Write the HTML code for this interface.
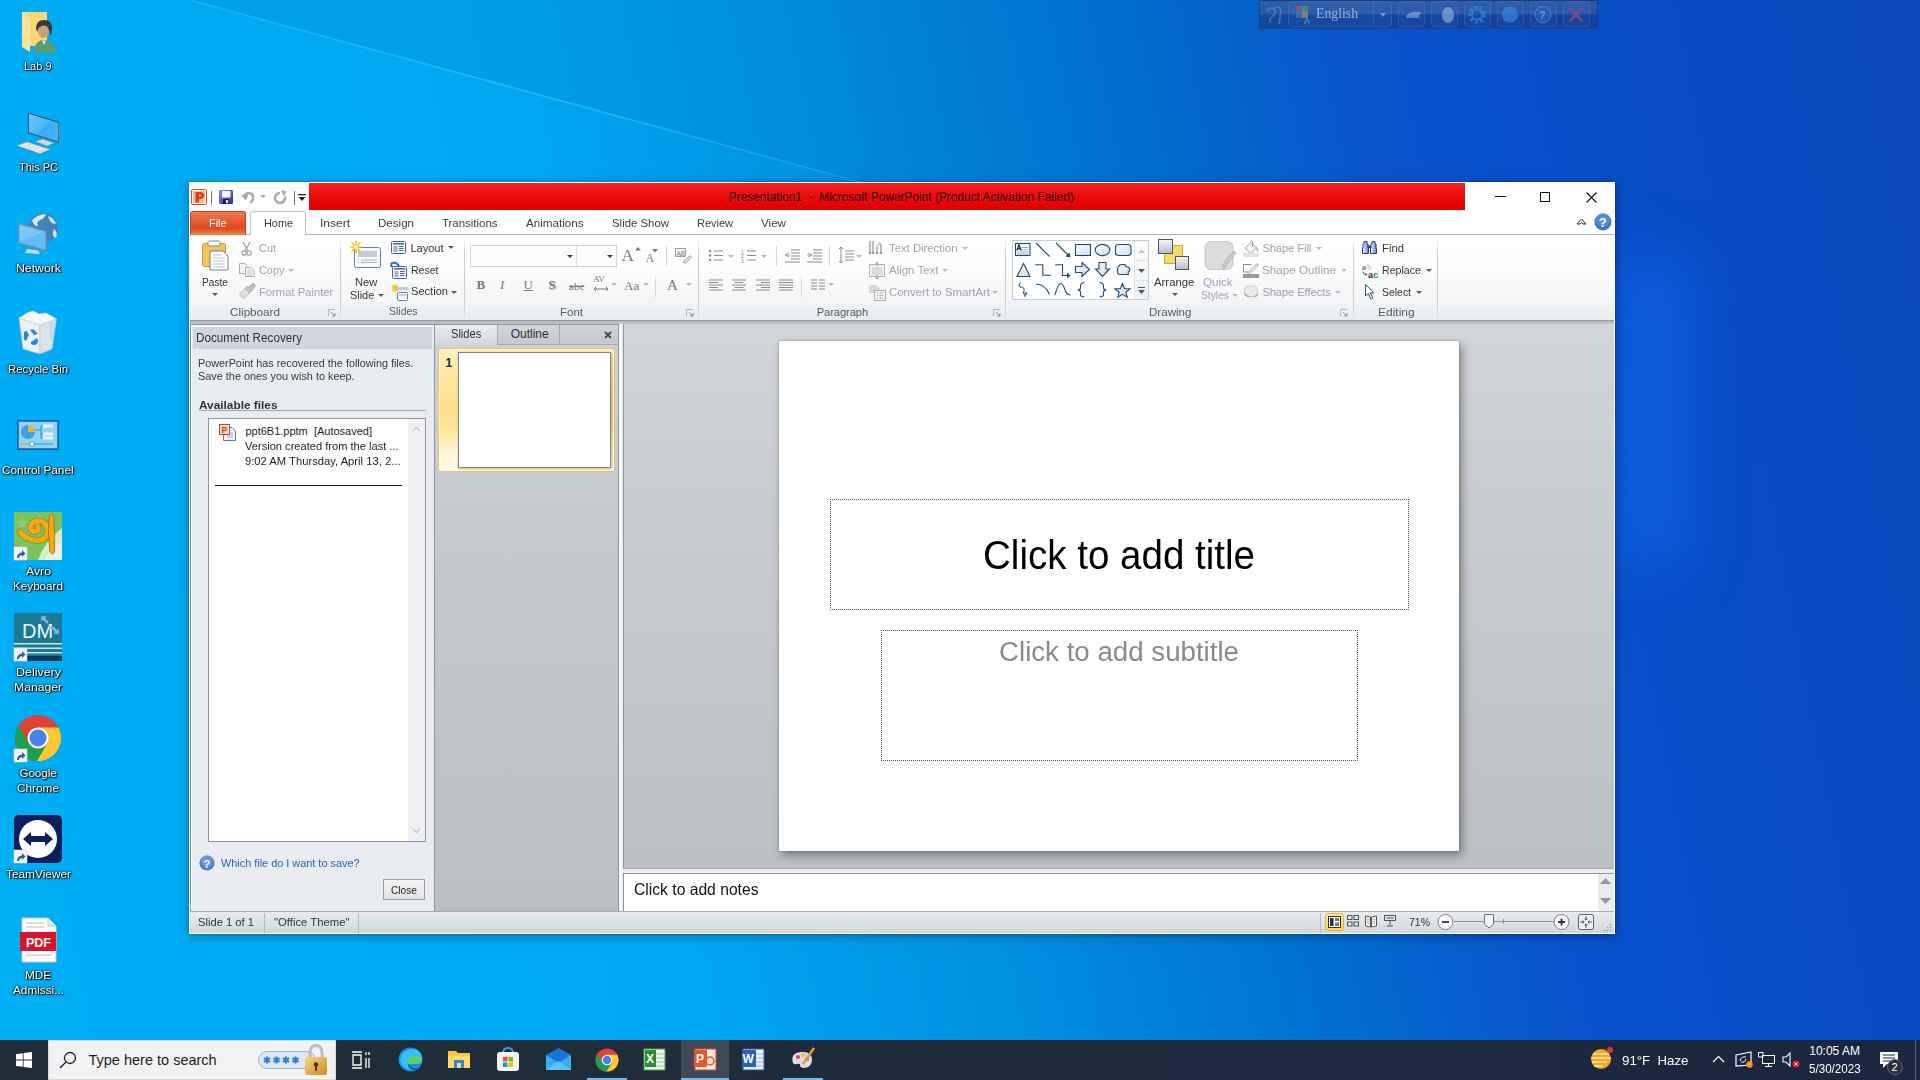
<!DOCTYPE html>
<html><head><meta charset="utf-8">
<style>
*{margin:0;padding:0;box-sizing:border-box}
html,body{width:1920px;height:1080px;overflow:hidden}
body{position:relative;font-family:"Liberation Sans",sans-serif;background:#0a6fe0}
.a{position:absolute}
.t{position:absolute;line-height:0;white-space:pre}
svg{overflow:visible}
.dl{color:#fff;text-shadow:0 0 2px rgba(0,0,0,.9),1px 1px 1px rgba(0,0,0,.8)}
</style></head><body>
<div class="a" style="left:0px;top:0px;width:1920px;height:1040px;background:linear-gradient(79deg,#00aef4 0px,#00a9f2 600px,#00a6f0 700px,#0090e0 1000px,#0070d0 1300px,#0857cc 1500px,#0851cc 1600px,#094cc4 1800px,#0a48bc 2032px)"></div>
<svg class="a" style="left:0;top:0" width="1920" height="1040"><defs><linearGradient id="ov" x1="190" y1="0" x2="1500" y2="0" gradientUnits="userSpaceOnUse"><stop offset="0" stop-color="#001a5a" stop-opacity=".07"/><stop offset=".6" stop-color="#001a5a" stop-opacity=".05"/><stop offset="1" stop-color="#001a5a" stop-opacity="0"/></linearGradient></defs><path d="M190 0 L1920 470 L1920 0Z" fill="url(#ov)"/></svg>
<div class="a" style="left:1615px;top:260px;width:70px;height:300px;background:rgba(20,115,255,.45);filter:blur(30px)"></div>
<svg class="a" style="left:0;top:0" width="1920" height="1040"><defs><linearGradient id="bm" x1="0" y1="0" x2="1" y2="0"><stop offset="0" stop-color="#5fd0ff" stop-opacity=".25"/><stop offset=".5" stop-color="#5fd0ff" stop-opacity=".45"/><stop offset="1" stop-color="#5fd0ff" stop-opacity=".2"/></linearGradient></defs><path d="M190 0 L860 182" stroke="url(#bm)" stroke-width="1.6" fill="none"/></svg>
<svg class="a" style="left:20px;top:12px;" width="40" height="44" viewBox="0 0 40 44">
<rect x="2" y="0" width="25" height="34" fill="#f3cd64"/>
<path d="M2 0 L27 0 L27 34 L2 34Z" fill="#f8d876"/>
<path d="M2 0 L10.5 7 L10 40 L2 35Z" fill="#fde39a"/>
<path d="M16 17 Q16 8 24 8 Q32 8 32 16 Q32 20 30 24 Q29 13 24 14 Q18 14 17 20Z" fill="#383838"/>
<ellipse cx="23.5" cy="19.5" rx="5.5" ry="6.5" fill="#c9a27a"/>
<path d="M17 18 Q17 10 24 10.5 Q30.5 11 31 17 Q28 13 24 13.5 Q19 13.5 17 18Z" fill="#383838"/>
<path d="M14 41 Q14 30 22 28 L26 28 Q35 30 36.5 41 Z" fill="#5a9c74"/>
<path d="M22 28.5 L24 33 L26 28.5Z" fill="#e8f0f4"/></svg>
<div class="t" style="left:24.25px;top:66.02px;font-size:11.5px;color:#fff;transform:scaleX(0.9556);transform-origin:0 0;text-shadow:1px 1px 1px #000,0 0 2px #000,0 0 3px rgba(0,0,0,.7);">Lab 9</div>
<svg class="a" style="left:16px;top:112px;" width="46" height="44" viewBox="0 0 46 44">
<defs><linearGradient id="pcs" x1="0" y1="0" x2="1" y2="1"><stop offset="0" stop-color="#6cc8fb"/><stop offset=".5" stop-color="#4ab8f8"/><stop offset=".51" stop-color="#36aef6"/><stop offset="1" stop-color="#41b4f7"/></linearGradient></defs>
<path d="M19.5 29.5 L26.5 27 L38 31 L31 34Z" fill="#d3d7db" stroke="#8c8f92" stroke-width=".5"/>
<path d="M12.4 1.2 L42.5 10.3 L42.5 30.2 L12.4 20.8Z" fill="url(#pcs)" stroke="#4a4a4a" stroke-width="1"/>
<path d="M42.5 10.3 L43.5 11 L43.5 30.8 L42.5 30.2Z" fill="#8a8a8a"/>
<path d="M1 33.5 L11 30 L34 37.5 L24 41.5Z" fill="#eceef0" stroke="#9a9a9a" stroke-width=".5"/>
<path d="M4.5 32.3 L27.5 39.8 M8 31 L31 38.6 M6 35.5 L16 32 M11 37 L21 33.6 M16 38.8 L26 35.2 M21 40.3 L31 36.8" stroke="#c4c6c8" stroke-width=".5"/></svg>
<div class="t" style="left:18.50px;top:167.02px;font-size:11.5px;color:#fff;transform:scaleX(0.9536);transform-origin:0 0;text-shadow:1px 1px 1px #000,0 0 2px #000,0 0 3px rgba(0,0,0,.7);">This PC</div>
<svg class="a" style="left:14px;top:212px;" width="50" height="46" viewBox="0 0 50 46">
<circle cx="29" cy="16" r="15" fill="#3f86b8"/>
<path d="M18 8 Q24 2 32 2 Q30 7 26 8 Q22 10 24 14 Q20 15 18 8Z" fill="#d6e7f3"/>
<path d="M34 4 Q40 6 42 12 Q38 12 36 9Z" fill="#d6e7f3"/>
<path d="M40 17 Q44 20 42 26 Q37 25 40 17Z" fill="#d6e7f3"/>
<path d="M4.5 11.5 L32 19.5 L32 38.5 L4.5 31Z" fill="#62bdf6" stroke="#7d8a96" stroke-width="1.3"/>
<path d="M6 13 L30 20 L6 29Z" fill="#8fd3fb" opacity=".5"/>
<path d="M13 37 L24 38.5 L26 42 L11 41Z" fill="#d4d8dc"/></svg>
<div class="t" style="left:15.50px;top:268.02px;font-size:11.5px;color:#fff;transform:scaleX(1.0670);transform-origin:0 0;text-shadow:1px 1px 1px #000,0 0 2px #000,0 0 3px rgba(0,0,0,.7);">Network</div>
<svg class="a" style="left:19px;top:311px;" width="38" height="44" viewBox="0 0 38 44">
<path d="M0 7 L21 14 L21 43 L4 38Z" fill="#eef1f4" stroke="#a9c4dc" stroke-width=".6"/>
<path d="M21 14 L37.5 8 L33 38 L21 43Z" fill="#dde3e8" stroke="#a9c4dc" stroke-width=".6"/>
<path d="M0 7 L8 2 L14 0 L20 3 L27 2 L37.5 8 L21 14Z" fill="#f6f7f8" stroke="#c9d3dc" stroke-width=".6"/>
<path d="M30 10 L36 12 L34 30 L31 28Z" fill="#b9d9ef" opacity=".7"/>
<path d="M11 19 Q15 17 17 21 L19 23 L15 24 Z M5 24 Q4 20 8 20 L10 24 L7 30 Q4 29 5 24Z M12 31 L18 27 Q20 30 18 33 Q15 35 12 33Z" fill="#2a86dc"/></svg>
<div class="t" style="left:8.00px;top:369.02px;font-size:11.5px;color:#fff;transform:scaleX(0.9882);transform-origin:0 0;text-shadow:1px 1px 1px #000,0 0 2px #000,0 0 3px rgba(0,0,0,.7);">Recycle Bin</div>
<svg class="a" style="left:17px;top:420px;" width="42" height="30" viewBox="0 0 42 30">
<rect x="0.5" y="0.5" width="41" height="29" fill="#2a7fcf" stroke="#1c5fa8"/>
<rect x="2" y="2" width="38" height="26" fill="#8fd3f7"/>
<circle cx="11" cy="12" r="7" fill="#3b9fe6"/><path d="M11 5 A7 7 0 0 1 18 12 L11 12Z" fill="#f6b02c"/>
<path d="M18 10 L24 10 L24 6 L36 6 M24 10 L24 14 L36 14 M24 14 L24 18 L36 18" stroke="#3a8ed6" stroke-width="1" fill="none"/>
<rect x="26" y="4.5" width="10" height="3" fill="#e9f4fb"/><rect x="26" y="12.5" width="10" height="3" fill="#e9f4fb"/><rect x="26" y="16.5" width="10" height="3" fill="#e9f4fb"/>
<path d="M4 24 L36 24" stroke="#3a8ed6" stroke-width="1"/><path d="M4 24 L14 24" stroke="#f6b02c" stroke-width="1.5"/><rect x="13" y="22" width="4" height="4" fill="#fff" stroke="#3a8ed6" stroke-width=".7"/></svg>
<div class="t" style="left:2.20px;top:470.02px;font-size:11.5px;color:#fff;transform:scaleX(1.0276);transform-origin:0 0;text-shadow:1px 1px 1px #000,0 0 2px #000,0 0 3px rgba(0,0,0,.7);">Control Panel</div>
<svg class="a" style="left:14px;top:512px;" width="48" height="48" viewBox="0 0 48 48">
<rect width="48" height="48" fill="#79c35a"/>
<path d="M24 48 Q30 30 48 16 L48 48Z" fill="#d9eec8"/>
<path d="M30 48 Q36 36 48 30 L48 48Z" fill="#e6f4dc"/>
<path d="M8 4 L10 9 L15 9 L11 12 L13 17 L8 14 L4 17 L5 12 L1 9 L6 9Z M26 2 L28 6 L32 6 L29 9 L30 13 L26 11 L22 13 L23 9 L20 6 L24 6Z" fill="#9ad47e" opacity=".6"/>
<path d="M6 20 Q13 28 23 28.5 Q33 28 33.5 19 Q33 9 24 9 Q16.5 9.5 16.5 15.5 Q17 20.5 22 19.5 Q25 18.5 24 14.5" stroke="#7a5a20" stroke-width="6.4" fill="none" stroke-linecap="round" opacity=".55"/>
<path d="M6 20 Q13 28 23 28.5 Q33 28 33.5 19 Q33 9 24 9 Q16.5 9.5 16.5 15.5 Q17 20.5 22 19.5 Q25 18.5 24 14.5" stroke="#f5a814" stroke-width="5" fill="none" stroke-linecap="round"/>
<path d="M35.5 3 Q37.5 0.5 39.5 3.5 Q41.5 20 40.5 40 Q38.5 44 36 40 Q33 22 35.5 3Z" fill="#f5a814" stroke="#8a6a2a" stroke-width=".7"/>
<g transform="translate(0,35)"><rect x="0" y="0" width="13" height="13" fill="#f4f6fa" stroke="#cfd5de" stroke-width=".6"/><path d="M3 11 Q3 6 8 5.5 L8 3 L11.5 6.5 L8 10 L8 8 Q5 8.5 5 11Z" fill="#2d5fa8"/></g></svg>
<div class="t" style="left:25.50px;top:571.02px;font-size:11.5px;color:#fff;transform:scaleX(1.0666);transform-origin:0 0;text-shadow:1px 1px 1px #000,0 0 2px #000,0 0 3px rgba(0,0,0,.7);">Avro</div>
<div class="t" style="left:13.00px;top:586.02px;font-size:11.5px;color:#fff;transform:scaleX(1.0157);transform-origin:0 0;text-shadow:1px 1px 1px #000,0 0 2px #000,0 0 3px rgba(0,0,0,.7);">Keyboard</div>
<svg class="a" style="left:14px;top:613px;" width="48" height="48" viewBox="0 0 48 48">
<rect width="48" height="48" fill="#1b7a93"/>
<text x="8" y="24" font-size="20" fill="#eef7fa" font-family="Liberation Sans" transform="scale(1,1.05)">DM</text>
<path d="M27 3 L33 3 L31 5 L35 9 L33 11 L29 7 L27 9Z M45 21 L39 21 L41 19 L37 15 L39 13 L43 17 L45 15Z M33 11 L37 15" fill="#7fb6e6" stroke="#3d7fc4" stroke-width=".6"/>
<rect x="0" y="30" width="48" height="1.5" fill="#cfe6ee"/><rect x="0" y="34.5" width="48" height="1.5" fill="#cfe6ee"/><rect x="0" y="39" width="48" height="1.5" fill="#cfe6ee"/>
<rect x="0" y="43" width="48" height="5" fill="#0c3a5c"/>
<g transform="translate(0,35)"><rect x="0" y="0" width="13" height="13" fill="#f4f6fa" stroke="#cfd5de" stroke-width=".6"/><path d="M3 11 Q3 6 8 5.5 L8 3 L11.5 6.5 L8 10 L8 8 Q5 8.5 5 11Z" fill="#2d5fa8"/></g></svg>
<div class="t" style="left:15.50px;top:672.02px;font-size:11.5px;color:#fff;transform:scaleX(1.0834);transform-origin:0 0;text-shadow:1px 1px 1px #000,0 0 2px #000,0 0 3px rgba(0,0,0,.7);">Delivery</div>
<div class="t" style="left:14.00px;top:687.02px;font-size:11.5px;color:#fff;transform:scaleX(1.0575);transform-origin:0 0;text-shadow:1px 1px 1px #000,0 0 2px #000,0 0 3px rgba(0,0,0,.7);">Manager</div>
<svg class="a" style="left:14px;top:714px;" width="48" height="48" viewBox="0 0 48 48"><circle cx="24" cy="24" r="23" fill="#db4437"/>
<path d="M24 24 L24 13.5 L44.46 13.5 A23 23 0 0 1 22.86 46.97 L33.09 29.25Z" fill="#fcc934"/>
<path d="M24 24 L33.09 29.25 L22.86 46.97 A23 23 0 0 1 4.68 11.53 L14.91 29.25Z" fill="#1e9e50"/>
<circle cx="24" cy="24" r="10.5" fill="#fff"/><circle cx="24" cy="24" r="8.5" fill="#4a80e8"/><g transform="translate(0,35)"><rect x="0" y="0" width="13" height="13" fill="#f4f6fa" stroke="#cfd5de" stroke-width=".6"/><path d="M3 11 Q3 6 8 5.5 L8 3 L11.5 6.5 L8 10 L8 8 Q5 8.5 5 11Z" fill="#2d5fa8"/></g></svg>
<div class="t" style="left:19.50px;top:773.02px;font-size:11.5px;color:#fff;text-shadow:1px 1px 1px #000,0 0 2px #000,0 0 3px rgba(0,0,0,.7);">Google</div>
<div class="t" style="left:17.00px;top:788.02px;font-size:11.5px;color:#fff;transform:scaleX(1.0269);transform-origin:0 0;text-shadow:1px 1px 1px #000,0 0 2px #000,0 0 3px rgba(0,0,0,.7);">Chrome</div>
<svg class="a" style="left:14px;top:815px;" width="48" height="48" viewBox="0 0 48 48">
<rect width="48" height="48" rx="5" fill="#0e1e5b"/>
<circle cx="24" cy="24" r="19" fill="#fff"/>
<path d="M9 24 L17 17 L17 21 L31 21 L31 17 L39 24 L31 31 L31 27 L17 27 L17 31Z" fill="#0e1e5b"/>
<g transform="translate(0,35)"><rect x="0" y="0" width="13" height="13" fill="#f4f6fa" stroke="#cfd5de" stroke-width=".6"/><path d="M3 11 Q3 6 8 5.5 L8 3 L11.5 6.5 L8 10 L8 8 Q5 8.5 5 11Z" fill="#2d5fa8"/></g></svg>
<div class="t" style="left:5.50px;top:874.02px;font-size:11.5px;color:#fff;transform:scaleX(1.0307);transform-origin:0 0;text-shadow:1px 1px 1px #000,0 0 2px #000,0 0 3px rgba(0,0,0,.7);">TeamViewer</div>
<svg class="a" style="left:20px;top:918px;" width="38" height="44" viewBox="0 0 38 44">
<path d="M2 0 L28 0 L36 8 L36 44 L2 44Z" fill="#fff" stroke="#c8c8c8"/>
<path d="M28 0 L28 8 L36 8" fill="#e8e8e8" stroke="#c8c8c8"/>
<path d="M6 5 L24 5 M6 9 L24 9" stroke="#bbb" stroke-width="1"/>
<rect x="0" y="14" width="36" height="19" fill="#d7142a"/>
<text x="6" y="29" font-size="12.5" font-weight="bold" fill="#fff" font-family="Liberation Sans">PDF</text>
<path d="M6 37 L32 37" stroke="#bbb"/></svg>
<div class="t" style="left:25.00px;top:975.02px;font-size:11.5px;color:#fff;transform:scaleX(1.0174);transform-origin:0 0;text-shadow:1px 1px 1px #000,0 0 2px #000,0 0 3px rgba(0,0,0,.7);">MDE</div>
<div class="t" style="left:12.50px;top:990.02px;font-size:11.5px;color:#fff;transform:scaleX(1.0233);transform-origin:0 0;text-shadow:1px 1px 1px #000,0 0 2px #000,0 0 3px rgba(0,0,0,.7);">Admissi...</div>
<div class="a" style="left:1259px;top:0px;width:339px;height:29px;background:linear-gradient(180deg,rgba(75,95,135,.55) 0,rgba(70,92,140,.5) 48%,rgba(30,55,120,.5) 52%,rgba(25,50,115,.55) 100%);border:1px solid rgba(30,55,110,.6)"></div>
<svg class="a" style="left:1259px;top:0;opacity:.62" width="339" height="29"><path d="M8 12 Q10 6 15 9 Q18 13 13 17 Q9 20 12 22 M15 9 Q20 4 22 10 L20 24" stroke="#6c87a8" stroke-width="1.6" fill="none"/><rect x="29.5" y="1.5" width="103" height="25" rx="3" fill="rgba(255,255,255,.04)" stroke="rgba(120,160,220,.35)"/><path d="M114.5 2 L114.5 26" stroke="rgba(120,160,220,.35)"/><path d="M121 13 L127 13 L124 17Z" fill="#a9c0e6"/><rect x="37" y="6" width="6" height="6" fill="#d9534f" opacity=".8"/><rect x="43" y="6" width="6" height="6" fill="#5cb85c" opacity=".8"/><rect x="37" y="12" width="6" height="6" fill="#428bca" opacity=".8"/><rect x="43" y="12" width="6" height="6" fill="#f0ad4e" opacity=".8"/><text x="45" y="24" font-size="9" fill="#c5d5ee" font-family="Liberation Sans">A</text><rect x="139.5" y="1.5" width="26" height="25" rx="3" fill="rgba(255,255,255,.04)" stroke="rgba(120,160,220,.35)"/><rect x="172.5" y="1.5" width="26" height="25" rx="3" fill="rgba(255,255,255,.04)" stroke="rgba(120,160,220,.35)"/><rect x="205.5" y="1.5" width="26" height="25" rx="3" fill="rgba(255,255,255,.04)" stroke="rgba(120,160,220,.35)"/><rect x="238.5" y="1.5" width="26" height="25" rx="3" fill="rgba(255,255,255,.04)" stroke="rgba(120,160,220,.35)"/><rect x="271.5" y="1.5" width="26" height="25" rx="3" fill="rgba(255,255,255,.04)" stroke="rgba(120,160,220,.35)"/><rect x="304.5" y="1.5" width="26" height="25" rx="3" fill="rgba(255,255,255,.04)" stroke="rgba(120,160,220,.35)"/><path d="M147 16 Q152 11 160 12 Q165 12 158 17Z" fill="#9cb5de"/><path d="M147 17 L160 17" stroke="#9cb5de" stroke-width="1.5"/><ellipse cx="189" cy="15" rx="6" ry="8" fill="#9cb5de"/><circle cx="218" cy="14.5" r="7" fill="none" stroke="#2f8ff0" stroke-width="4" stroke-dasharray="3 2"/><circle cx="218" cy="14.5" r="5" fill="none" stroke="#2f8ff0" stroke-width="2"/><circle cx="251" cy="14.5" r="8" fill="#3b8fe8"/><circle cx="284" cy="14.5" r="8" fill="#2a62c8" stroke="#6f9ce0" stroke-width="1"/><text x="280" y="19" font-size="11" font-weight="bold" fill="#a8c4ee" font-family="Liberation Sans">?</text><path d="M311 8 L323 21 M323 8 L311 21" stroke="#a0507a" stroke-width="3"/></svg>
<div class="t" style="left:1316.00px;top:13.65px;font-size:14px;color:#9fb3d6;font-family:'Liberation Serif',serif;transform:scaleX(0.9818);transform-origin:0 0;">English</div>
<div class="a" style="left:0px;top:1040px;width:1920px;height:40px;background:linear-gradient(90deg,#1f2d38 0,#1f2c3a 700px,#1d2a3e 1300px,#1b2640 1920px)"></div>
<svg class="a" style="left:16px;top:1052px;" width="16" height="16" viewBox="0 0 16 16"><path d="M0 2.2 L6.8 1.2 L6.8 7.6 L0 7.6Z M7.6 1.1 L16 0 L16 7.6 L7.6 7.6Z M0 8.4 L6.8 8.4 L6.8 14.8 L0 13.9Z M7.6 8.4 L16 8.4 L16 16 L7.6 14.9Z" fill="#fff"/></svg>
<div class="a" style="left:48px;top:1040px;width:288px;height:40px;background:#f2f2f2;border:1px solid #dadada"></div>
<svg class="a" style="left:59px;top:1051px;" width="18" height="18" viewBox="0 0 18 18"><circle cx="11" cy="7" r="5.5" fill="none" stroke="#222" stroke-width="1.3"/><path d="M7 11 L1 17" stroke="#222" stroke-width="1.5"/></svg>
<div class="t" style="left:88.50px;top:1060.48px;font-size:14.5px;color:#1e1e1e;">Type here to search</div>
<svg class="a" style="left:256px;top:1044px" width="72" height="34"><defs><linearGradient id="lkg" x1="0" y1="0" x2="1" y2="1"><stop offset="0" stop-color="#f8da80"/><stop offset="1" stop-color="#c98a25"/></linearGradient></defs><rect x="2.5" y="7.5" width="57" height="17" rx="8.5" fill="#dde7f4" stroke="#96b2de"/><path d="M11 12.5 L11 19.5 M7.9 14.2 L14.1 17.8 M14.1 14.2 L7.9 17.8" stroke="#2f7fd8" stroke-width="2"/><path d="M20.5 12.5 L20.5 19.5 M17.4 14.2 L23.6 17.8 M23.6 14.2 L17.4 17.8" stroke="#2f7fd8" stroke-width="2"/><path d="M30 12.5 L30 19.5 M26.9 14.2 L33.1 17.8 M33.1 14.2 L26.9 17.8" stroke="#2f7fd8" stroke-width="2"/><path d="M39.5 12.5 L39.5 19.5 M36.4 14.2 L42.6 17.8 M42.6 14.2 L36.4 17.8" stroke="#2f7fd8" stroke-width="2"/><path d="M54 15 L54 9 Q54 1.5 60 1.5 Q66 1.5 66 9 L66 15" stroke="#bdbdbd" stroke-width="3" fill="none"/><rect x="49" y="13" width="22" height="18" rx="2.5" fill="url(#lkg)"/><circle cx="60" cy="20.5" r="2.2" fill="#4a2e08"/><path d="M60 21 L60 27" stroke="#4a2e08" stroke-width="1.8"/></svg>
<svg class="a" style="left:351px;top:1051px;" width="19" height="18" viewBox="0 0 19 18"><path d="M1 1 L11 1 M1 17 L11 17 M2 4 L10 4 L10 14 L2 14Z M15 1 L15 4 M15 7 L15 17 M18 1 L18 4 M18 7 L18 17" stroke="#fff" stroke-width="1.3" fill="none"/></svg>
<svg class="a" style="left:398px;top:1047px;" width="25" height="25" viewBox="0 0 25 25"><circle cx="12.5" cy="12.5" r="12" fill="#1a8fe0"/><path d="M2 14 Q4 2 15 2 Q24 3 24 12 Q24 17 18 17 L10 17 Q10 22 16 23 Q6 24 2 14Z" fill="#35c1f1"/><path d="M24 12 Q24 17 18 17 L10 17 Q9 10 15 9 Q23 9 24 12Z" fill="#5fcf6a"/><path d="M10 17 Q10 22 16 23 Q20 24 23 20 Q17 23 13 20Z" fill="#0c59a4"/></svg>
<svg class="a" style="left:447px;top:1048px;" width="24" height="22" viewBox="0 0 24 22"><path d="M1 3 L9 3 L11 5 L23 5 L23 20 L1 20Z" fill="#f8c544"/><path d="M1 8 L23 8 L23 20 L1 20Z" fill="#ffd96a"/><rect x="7" y="12" width="10" height="8" fill="#2f89d8"/><rect x="10" y="15" width="4" height="5" fill="#ffd96a"/></svg>
<svg class="a" style="left:496px;top:1047px;" width="24" height="25" viewBox="0 0 24 25"><path d="M7 6 Q7 1 12 1 Q17 1 17 6" stroke="#2aa0e8" stroke-width="2" fill="none"/><rect x="1" y="5" width="22" height="19" rx="3" fill="#f4f4f4"/><rect x="7" y="10" width="4.5" height="4.5" fill="#f25022"/><rect x="12.5" y="10" width="4.5" height="4.5" fill="#7fba00"/><rect x="7" y="15.5" width="4.5" height="4.5" fill="#00a4ef"/><rect x="12.5" y="15.5" width="4.5" height="4.5" fill="#ffb900"/></svg>
<svg class="a" style="left:546px;top:1048px;" width="25" height="22" viewBox="0 0 25 22"><path d="M0 7 L12.5 0 L25 7 L25 22 L0 22Z" fill="#1a74d2"/><path d="M0 7 L12.5 15 L25 7 L25 22 L0 22Z" fill="#38aef0"/><path d="M0 22 L12.5 13 L25 22Z" fill="#5cc3f5"/></svg>
<svg class="a" style="left:595px;top:1048px;" width="24" height="24" viewBox="0 0 48 48"><circle cx="24" cy="24" r="23" fill="#db4437"/>
<path d="M24 24 L24 13.5 L44.46 13.5 A23 23 0 0 1 22.86 46.97 L33.09 29.25Z" fill="#fcc934"/>
<path d="M24 24 L33.09 29.25 L22.86 46.97 A23 23 0 0 1 4.68 11.53 L14.91 29.25Z" fill="#1e9e50"/>
<circle cx="24" cy="24" r="10.5" fill="#fff"/><circle cx="24" cy="24" r="8.5" fill="#4a80e8"/></svg>
<div class="a" style="left:587px;top:1078px;width:40px;height:2px;background:#76b9ed"></div>
<svg class="a" style="left:643px;top:1048px;" width="24" height="23" viewBox="0 0 24 23"><rect x="1" y="1" width="21" height="21" fill="#e9f3e6" stroke="#4c9a4c"/><path d="M12 6 L22 6 M12 10 L22 10 M12 14 L22 14 M12 18 L22 18" stroke="#8dbb8a" stroke-width=".8"/><path d="M2 2 L13 2 L13 19 L2 19Z" fill="#2d8a37"/><text x="3" y="15" font-size="12" font-weight="bold" fill="#fff" font-family="Liberation Sans">X</text></svg>
<div class="a" style="left:681px;top:1040px;width:48px;height:40px;background:#3e4b56"></div>
<div class="a" style="left:681px;top:1078px;width:48px;height:2px;background:#76b9ed"></div>
<svg class="a" style="left:693px;top:1048px;" width="24" height="23" viewBox="0 0 24 23"><rect x="2" y="1" width="21" height="21" fill="#fbe5dc" stroke="#d24726"/><path d="M1 2 L14 2 L14 19 L1 19Z" fill="#e2572c"/><text x="3" y="15" font-size="12" font-weight="bold" fill="#fff" font-family="Liberation Sans">P</text><circle cx="17" cy="13" r="4" fill="none" stroke="#e2572c" stroke-width="1.5"/></svg>
<svg class="a" style="left:741px;top:1048px;" width="25" height="23" viewBox="0 0 25 23"><rect x="2" y="1" width="21" height="21" fill="#e6eefa" stroke="#2b5797"/><path d="M13 6 L22 6 M13 10 L22 10 M13 14 L22 14 M13 18 L22 18" stroke="#8aa7d3" stroke-width=".8"/><path d="M1 2 L15 2 L15 19 L1 19Z" fill="#2b5fb4"/><text x="1.5" y="15" font-size="12" font-weight="bold" fill="#fff" font-family="Liberation Sans">W</text></svg>
<svg class="a" style="left:790px;top:1047px;" width="25" height="25" viewBox="0 0 25 25"><path d="M3 16 Q0 6 11 5 Q22 4 22 13 Q22 20 14 21 Q10 21 10 18 Q10 16 7 17 Q4 18 3 16Z" fill="#d9dde6"/><circle cx="8" cy="10" r="2" fill="#e23c3c"/><circle cx="13" cy="8" r="2" fill="#f2c12e"/><circle cx="17" cy="12" r="2" fill="#3c8fe2"/><path d="M24 1 L13 17" stroke="#e39a30" stroke-width="2.5"/></svg>
<div class="a" style="left:783px;top:1078px;width:40px;height:2px;background:#76b9ed"></div>
<svg class="a" style="left:1589px;top:1047px;" width="25" height="22" viewBox="0 0 25 22"><circle cx="12" cy="12" r="10" fill="#f6a623"/><path d="M4 7 L20 7 M2 11 L22 11 M3 15 L18 15 M5 19 L14 19" stroke="#fde7b0" stroke-width="1.5"/><circle cx="21" cy="3" r="3" fill="#d83b2c"/></svg>
<div class="t" style="left:1621.50px;top:1060.50px;font-size:13px;color:#fff;transform:scaleX(1.0204);transform-origin:0 0;">91°F  Haze</div>
<svg class="a" style="left:1712px;top:1055px;" width="13" height="8" viewBox="0 0 13 8"><path d="M1 7 L6.5 1.5 L12 7" stroke="#fff" stroke-width="1.2" fill="none"/></svg>
<svg class="a" style="left:1735px;top:1051px;" width="18" height="17" viewBox="0 0 18 17"><path d="M1 4 L16 1 L16 14 L1 15Z" stroke="#fff" stroke-width="1.2" fill="none"/><path d="M5 10 Q6 5 11 6 M11 8 Q10 12 6 11" stroke="#fff" stroke-width="1" fill="none"/><circle cx="14.5" cy="13.5" r="3.2" fill="#f7941d"/></svg>
<svg class="a" style="left:1758px;top:1052px;" width="17" height="16" viewBox="0 0 17 16"><rect x="4.5" y="3.5" width="12" height="8" stroke="#fff" fill="none"/><path d="M10.5 11.5 L10.5 14.5 M7 14.5 L14 14.5 M0.5 0.5 L5 0.5 L5 5 L0.5 5Z" stroke="#fff" fill="none"/></svg>
<svg class="a" style="left:1782px;top:1052px;" width="18" height="16" viewBox="0 0 18 16"><path d="M1 5 L4 5 L8 1 L8 14 L4 10 L1 10Z" stroke="#fff" stroke-width="1.1" fill="none"/><circle cx="14" cy="12" r="3.6" fill="#e81123"/><path d="M12.5 10.5 L15.5 13.5 M15.5 10.5 L12.5 13.5" stroke="#fff" stroke-width="1"/></svg>
<div class="t" style="left:1809.25px;top:1050.84px;font-size:12px;color:#fff;">10:05 AM</div>
<div class="t" style="left:1808.65px;top:1068.84px;font-size:12px;color:#fff;transform:scaleX(0.9684);transform-origin:0 0;">5/30/2023</div>
<svg class="a" style="left:1879px;top:1051px;" width="28" height="25" viewBox="0 0 28 25"><path d="M1 1 L19 1 L19 13 L8 13 L4 17 L4 13 L1 13Z" fill="#fff"/><path d="M4 4 L16 4 M4 7 L16 7 M4 10 L13 10" stroke="#1b2640" stroke-width="1"/><circle cx="16" cy="16" r="7.5" fill="#2a3038" stroke="#5c6570" stroke-width="1"/><text x="12.5" y="20" font-size="11" fill="#fff" font-family="Liberation Sans">2</text></svg>
<div class="a" style="left:1915px;top:1040px;width:1px;height:40px;background:#5a6470"></div>
<div class="a" style="left:189px;top:182px;width:1426px;height:752px;background:#fff;box-shadow:0 2px 10px rgba(0,0,0,.35),0 0 1px rgba(0,0,0,.4)"></div>
<svg class="a" style="left:191px;top:189px;" width="16" height="16" viewBox="0 0 16 16"><rect x="0.5" y="0.5" width="15" height="15" rx="1.5" fill="#fff" stroke="#dd4a18"/><rect x="2" y="2" width="12" height="12" fill="#fbb79c"/><path d="M4.5 3 L9.5 3 Q13 3.3 13 6.5 Q13 9.7 9.5 10 L8 10 L8 13.5 L4.5 13.5Z M8 5.5 L8 7.7 L9 7.7 Q10 7.6 10 6.6 Q10 5.6 9 5.5Z" fill="#d0480e" fill-rule="evenodd"/></svg>
<div class="a" style="left:211px;top:191px;width:1px;height:14px;background:#777"></div>
<svg class="a" style="left:219px;top:190px;" width="14" height="14" viewBox="0 0 14 14"><defs><linearGradient id="svg1" x1="0" y1="0" x2="1" y2="1"><stop offset="0" stop-color="#8a8af5"/><stop offset="1" stop-color="#2c2ca8"/></linearGradient></defs><rect x="0" y="0" width="14" height="14" rx="1" fill="url(#svg1)"/><rect x="3" y="1" width="8.5" height="6.5" fill="#f4f6fc"/><rect x="4" y="9" width="6" height="5" fill="#1a1a2a"/><rect x="6.8" y="10" width="2.4" height="3.2" fill="#dde"/></svg>
<svg class="a" style="left:241px;top:190px;" width="14" height="14" viewBox="0 0 14 14"><path d="M3.5 8 Q3 3 8 3 Q12.5 3.5 12 8.5 Q11.5 11.5 9 13" stroke="#acacac" stroke-width="2.6" fill="none"/><path d="M0 5 L5 10.5 L7.5 4.5Z" fill="#acacac"/></svg>
<svg class="a" style="left:260px;top:195px;" width="6" height="3" viewBox="0 0 6 3"><path d="M0 0 L6 0 L3 3Z" fill="#a8a8a8"/></svg>
<svg class="a" style="left:273px;top:190px;" width="14" height="14" viewBox="0 0 14 14"><path d="M7 3 A5 5 0 1 0 11.8 6.5" stroke="#acacac" stroke-width="2.6" fill="none"/><path d="M8 0 L13.5 1.5 L10.5 6.5Z" fill="#acacac"/></svg>
<div class="a" style="left:294px;top:191px;width:1px;height:14px;background:#777"></div>
<svg class="a" style="left:298px;top:194px;" width="8" height="7" viewBox="0 0 8 7"><rect x="0" y="0" width="8" height="1.3" fill="#222"/><path d="M0.5 3 L7.5 3 L4 7Z" fill="#222"/></svg>
<div class="a" style="left:309px;top:183px;width:1156px;height:27px;background:linear-gradient(180deg,#f5201f 0,#ea0f0f 45%,#dc0000 100%)"></div>
<div class="t" style="left:729.00px;top:197.34px;font-size:12px;color:#2a0000;transform:scaleX(0.9909);transform-origin:0 0;">Presentation1  -  Microsoft PowerPoint (Product Activation Failed)</div>
<div class="a" style="left:1495px;top:196px;width:11px;height:1px;background:#111"></div>
<div class="a" style="left:1540px;top:192px;width:10px;height:10px;border:1px solid #111"></div>
<svg class="a" style="left:1586px;top:192px;" width="11" height="11" viewBox="0 0 11 11"><path d="M0.5 0.5 L10.5 10.5 M10.5 0.5 L0.5 10.5" stroke="#111" stroke-width="1.1"/></svg>
<div class="a" style="left:190px;top:234px;width:1424px;height:1px;background:#aab1b8"></div>
<div class="a" style="left:190px;top:211px;width:56px;height:24px;background:linear-gradient(180deg,#ef7a52 0,#e45a2e 45%,#d8482a 70%,#ef8a3a 100%);border:1px solid #c9411c;border-bottom:none;border-radius:3px 3px 0 0"></div>
<div class="t" style="left:209.25px;top:223.02px;font-size:11.5px;color:#fff;transform:scaleX(0.9444);transform-origin:0 0;">File</div>
<div class="a" style="left:250px;top:211px;width:56px;height:24px;background:#fff;border:1px solid #bcc3ca;border-bottom:none;border-radius:3px 3px 0 0"></div>
<div class="t" style="left:263.50px;top:223.02px;font-size:11.5px;color:#3c3c3c;transform:scaleX(0.9454);transform-origin:0 0;">Home</div>
<div class="t" style="left:320.00px;top:223.02px;font-size:11.5px;color:#3c3c3c;transform:scaleX(1.0431);transform-origin:0 0;">Insert</div>
<div class="t" style="left:378.00px;top:223.02px;font-size:11.5px;color:#3c3c3c;transform:scaleX(1.0057);transform-origin:0 0;">Design</div>
<div class="t" style="left:442.00px;top:223.02px;font-size:11.5px;color:#3c3c3c;transform:scaleX(0.9943);transform-origin:0 0;">Transitions</div>
<div class="t" style="left:526.00px;top:223.02px;font-size:11.5px;color:#3c3c3c;transform:scaleX(1.0108);transform-origin:0 0;">Animations</div>
<div class="t" style="left:612.00px;top:223.02px;font-size:11.5px;color:#3c3c3c;transform:scaleX(0.9907);transform-origin:0 0;">Slide Show</div>
<div class="t" style="left:697.00px;top:223.02px;font-size:11.5px;color:#3c3c3c;transform:scaleX(0.9547);transform-origin:0 0;">Review</div>
<div class="t" style="left:761.00px;top:223.02px;font-size:11.5px;color:#3c3c3c;transform:scaleX(1.0114);transform-origin:0 0;">View</div>
<svg class="a" style="left:1576px;top:217px;" width="11" height="9" viewBox="0 0 11 9"><path d="M1 7 L5.5 2 L10 7 L7 7 L5.5 5.5 L4 7Z" stroke="#333" stroke-width="1" fill="none"/></svg>
<svg class="a" style="left:1594px;top:213px;" width="18" height="18" viewBox="0 0 18 18"><circle cx="9" cy="9" r="8.5" fill="#3f76c8"/><circle cx="9" cy="7" r="7" fill="#6f9ee0" opacity=".5"/><text x="4.8" y="14" font-size="13" font-weight="bold" fill="#fff" font-family="Liberation Sans">?</text></svg>
<div class="a" style="left:190px;top:235px;width:1424px;height:85px;background:linear-gradient(180deg,#ffffff 0,#fdfdfe 40%,#f3f5f7 75%,#e9ecef 100%)"></div>
<div class="a" style="left:190px;top:320px;width:1424px;height:1px;background:#929aa3"></div>
<div class="a" style="left:190px;top:321px;width:1424px;height:4px;background:linear-gradient(180deg,#b2b7bd,#c6cacf)"></div>
<div class="a" style="left:190px;top:324px;width:429px;height:1px;background:#8c939b"></div>
<div class="a" style="left:340px;top:238px;width:1px;height:80px;background:linear-gradient(180deg,rgba(200,205,212,0),#c9ced5 20%,#c9ced5 80%,rgba(200,205,212,.3))"></div>
<div class="a" style="left:464px;top:238px;width:1px;height:80px;background:linear-gradient(180deg,rgba(200,205,212,0),#c9ced5 20%,#c9ced5 80%,rgba(200,205,212,.3))"></div>
<div class="a" style="left:698px;top:238px;width:1px;height:80px;background:linear-gradient(180deg,rgba(200,205,212,0),#c9ced5 20%,#c9ced5 80%,rgba(200,205,212,.3))"></div>
<div class="a" style="left:1005px;top:238px;width:1px;height:80px;background:linear-gradient(180deg,rgba(200,205,212,0),#c9ced5 20%,#c9ced5 80%,rgba(200,205,212,.3))"></div>
<div class="a" style="left:1353px;top:238px;width:1px;height:80px;background:linear-gradient(180deg,rgba(200,205,212,0),#c9ced5 20%,#c9ced5 80%,rgba(200,205,212,.3))"></div>
<div class="a" style="left:1437px;top:238px;width:1px;height:80px;background:linear-gradient(180deg,rgba(200,205,212,0),#c9ced5 20%,#c9ced5 80%,rgba(200,205,212,.3))"></div>
<svg class="a" style="left:202px;top:240px;" width="27" height="31" viewBox="0 0 27 31"><rect x="0.5" y="3.5" width="23" height="23" rx="2" fill="#f3c35c" stroke="#c99a3a"/><rect x="6" y="1" width="12" height="5" rx="1" fill="#fff" stroke="#8a8a8a"/><path d="M8 11 L21 11 L26 16 L26 30 L8 30Z" fill="#fff" stroke="#6f7f95"/><path d="M11 15 L19 15 M11 18 L23 18 M11 21 L23 21 M11 24 L23 24 M11 27 L23 27" stroke="#b8c3d0" stroke-width="1"/></svg>
<div class="t" style="left:201.50px;top:281.79px;font-size:11px;color:#363636;transform:scaleX(0.9243);transform-origin:0 0;">Paste</div>
<svg class="a" style="left:211.5px;top:293.0px;" width="6" height="3" viewBox="0 0 6 3"><path d="M0 0 L6 0 L3 3Z" fill="#595959"/></svg>
<svg class="a" style="left:241px;top:241px;" width="11" height="15" viewBox="0 0 11 15"><path d="M2 1 L7 10 M9 1 L4 10" stroke="#a6a6a6" stroke-width="1.5"/><circle cx="3" cy="12" r="2.2" stroke="#a6a6a6" stroke-width="1.3" fill="none"/><circle cx="8" cy="12" r="2.2" stroke="#a6a6a6" stroke-width="1.3" fill="none"/></svg>
<div class="t" style="left:258.60px;top:247.89px;font-size:11px;color:#a3a3ad;transform:scaleX(0.9931);transform-origin:0 0;">Cut</div>
<svg class="a" style="left:239px;top:263px;" width="16" height="14" viewBox="0 0 16 14"><path d="M0.5 0.5 L6 0.5 L8 2.5 L8 10.5 L0.5 10.5Z" fill="#f4f4f4" stroke="#b0b0b0"/><path d="M6.5 4.5 L12 4.5 L15 7.5 L15 13.5 L6.5 13.5Z" fill="#f4f4f4" stroke="#b0b0b0"/><path d="M8.5 8 L13 8 M8.5 10 L13 10 M8.5 12 L13 12" stroke="#c4c4c4"/></svg>
<div class="t" style="left:258.60px;top:269.69px;font-size:11px;color:#a3a3ad;transform:scaleX(0.9891);transform-origin:0 0;">Copy</div>
<svg class="a" style="left:288px;top:269.0px;" width="6" height="3" viewBox="0 0 6 3"><path d="M0 0 L6 0 L3 3Z" fill="#bbbbc4"/></svg>
<svg class="a" style="left:239px;top:284px;" width="17" height="16" viewBox="0 0 17 16"><path d="M0.5 10 L6 4.5 L10.5 9 L5 14.5 Q2 14 0.5 10Z" fill="#e2e2e2" stroke="#b4b4b4" stroke-width=".8"/><path d="M6 4.5 L8.5 2 L13 6.5 L10.5 9Z" fill="#c8c8c8" stroke="#a8a8a8" stroke-width=".8"/><path d="M9.5 3 L14 -0.5 Q16.5 0 16 2.5 L12 7" fill="#bdbdbd" stroke="#a0a0a0" stroke-width=".8"/><path d="M2 11 L4 13 M3.5 9 L6.5 12" stroke="#c8c8c8" stroke-width=".7"/></svg>
<div class="t" style="left:258.60px;top:291.89px;font-size:11px;color:#a3a3ad;transform:scaleX(1.0214);transform-origin:0 0;">Format Painter</div>
<div class="t" style="left:230.40px;top:311.69px;font-size:11px;color:#545a66;transform:scaleX(1.0619);transform-origin:0 0;">Clipboard</div>
<svg class="a" style="left:328px;top:309px;" width="8" height="8" viewBox="0 0 8 8"><path d="M0.5 7 L0.5 0.5 L7 0.5" stroke="#b4b8be" fill="none"/><path d="M3 3 L7 7 M7 4 L7 7 L4 7" stroke="#8c9096" fill="none"/></svg>
<svg class="a" style="left:350px;top:241px;" width="32" height="28" viewBox="0 0 32 28"><rect x="4.5" y="6.5" width="26" height="20" rx="2" fill="#f7f8fb" stroke="#6d7f97"/><rect x="8" y="10" width="19" height="6" fill="#c4cad6"/><path d="M8 19 L9 19 M11 19 L27 19 M8 21.5 L9 21.5 M11 21.5 L27 21.5" stroke="#aab3c2"/><path d="M6 0 L6 12 M0 6 L12 6 M1.5 1.5 L10.5 10.5 M10.5 1.5 L1.5 10.5" stroke="#f2c21d" stroke-width="1.6"/><circle cx="6" cy="6" r="2" fill="#fff6c0"/></svg>
<div class="t" style="left:355.35px;top:281.99px;font-size:11px;color:#363636;transform:scaleX(1.0134);transform-origin:0 0;">New</div>
<div class="t" style="left:350.40px;top:294.69px;font-size:11px;color:#363636;transform:scaleX(0.9894);transform-origin:0 0;">Slide</div>
<svg class="a" style="left:377.5px;top:294.0px;" width="6" height="3" viewBox="0 0 6 3"><path d="M0 0 L6 0 L3 3Z" fill="#595959"/></svg>
<svg class="a" style="left:391px;top:241px;" width="15" height="13" viewBox="0 0 15 13"><rect x="0.5" y="0.5" width="14" height="12" rx="1" fill="#f4f6fa" stroke="#4f6384"/><rect x="2" y="2" width="11" height="1.6" fill="#5a6f93"/><rect x="2.5" y="5" width="4" height="6" fill="#a9b0bb"/><path d="M8 5.5 L12.5 5.5 M8 7.5 L12.5 7.5 M8 9.5 L12.5 9.5" stroke="#4a66a8"/></svg>
<div class="t" style="left:410.50px;top:247.69px;font-size:11px;color:#363636;">Layout</div>
<svg class="a" style="left:447.5px;top:246.0px;" width="6" height="3" viewBox="0 0 6 3"><path d="M0 0 L6 0 L3 3Z" fill="#595959"/></svg>
<svg class="a" style="left:391px;top:262px;" width="17" height="17" viewBox="0 0 17 17"><g transform="translate(1,4)"><rect x="0.5" y="0.5" width="14" height="12" rx="1" fill="#f4f6fa" stroke="#4f6384"/><rect x="2" y="2" width="11" height="1.6" fill="#5a6f93"/><rect x="2.5" y="5" width="4" height="6" fill="#a9b0bb"/><path d="M8 5.5 L12.5 5.5 M8 7.5 L12.5 7.5 M8 9.5 L12.5 9.5" stroke="#4a66a8"/></g><path d="M0 2 Q4 -1 7 3 L8 5" stroke="#2f6fcf" stroke-width="2.2" fill="none"/><path d="M0 0 L2 5 L-1 5Z" fill="#2f6fcf"/></svg>
<div class="t" style="left:410.50px;top:269.59px;font-size:11px;color:#363636;transform:scaleX(0.9570);transform-origin:0 0;">Reset</div>
<svg class="a" style="left:391px;top:284px;" width="17" height="17" viewBox="0 0 17 17"><path d="M4 0 L4 8 M0 4 L8 4 M1 1 L7 7 M7 1 L1 7" stroke="#f2c21d" stroke-width="1.2"/><rect x="6" y="3" width="11" height="3" fill="#c8ccd2"/><rect x="6.5" y="8.5" width="10" height="8" rx="1" fill="#f6f8fb" stroke="#6d7f97"/><rect x="8" y="10" width="7" height="2" fill="#c4cad6"/></svg>
<div class="t" style="left:410.50px;top:291.49px;font-size:11px;color:#363636;transform:scaleX(1.0084);transform-origin:0 0;">Section</div>
<svg class="a" style="left:451px;top:290.5px;" width="6" height="3" viewBox="0 0 6 3"><path d="M0 0 L6 0 L3 3Z" fill="#595959"/></svg>
<div class="t" style="left:388.60px;top:311.39px;font-size:11px;color:#545a66;transform:scaleX(0.9546);transform-origin:0 0;">Slides</div>
<div class="a" style="left:470px;top:245px;width:147px;height:22px;background:#fbfcfd;border:1px solid #cfd6de"></div>
<div class="a" style="left:576px;top:246px;width:1px;height:20px;background:#dde2e8"></div>
<svg class="a" style="left:566.5px;top:254.5px;" width="6" height="3" viewBox="0 0 6 3"><path d="M0 0 L6 0 L3 3Z" fill="#444"/></svg>
<svg class="a" style="left:606.5px;top:254.5px;" width="6" height="3" viewBox="0 0 6 3"><path d="M0 0 L6 0 L3 3Z" fill="#444"/></svg>
<div class="t" style="left:621.5px;top:256.11px;font-size:17px;color:#7a7a7a;font-family:'Liberation Serif',serif">A</div>
<svg class="a" style="left:635px;top:247px;" width="6" height="4" viewBox="0 0 6 4"><path d="M0 3.5 L3 0 L6 3.5Z" fill="#7a7a7a"/></svg>
<div class="t" style="left:645.5px;top:257.84px;font-size:12px;color:#7a7a7a;font-family:'Liberation Serif',serif">A</div>
<svg class="a" style="left:652px;top:249px;" width="6" height="4" viewBox="0 0 6 4"><path d="M0 0 L6 0 L3 3.5Z" fill="#7a7a7a"/></svg>
<div class="a" style="left:666px;top:246px;width:1px;height:20px;background:#d4d8de"></div>
<svg class="a" style="left:675px;top:248px;" width="17" height="16" viewBox="0 0 17 16"><rect x="0.5" y="0.5" width="10" height="8" fill="#f6f6f6" stroke="#a0a0a0"/><text x="1.5" y="7.5" font-size="6.5" fill="#7a7a7a" font-family="Liberation Sans">AB</text><path d="M8 14 L14 8 Q16 7 16.5 9 L11 15 Q9 16 8 14Z" fill="#e4e4e4" stroke="#a8a8a8"/></svg>
<div class="t" style="left:476.5px;top:285.00px;font-size:13px;font-weight:bold;color:#7a7a7a;font-family:'Liberation Serif',serif">B</div>
<div class="t" style="left:500px;top:285.00px;font-size:13px;font-style:italic;color:#7a7a7a;font-family:'Liberation Serif',serif">I</div>
<div class="t" style="left:523.5px;top:285.00px;font-size:13px;color:#7a7a7a;font-family:'Liberation Serif',serif;text-decoration:underline">U</div>
<div class="t" style="left:548.5px;top:285.00px;font-size:13px;font-weight:bold;color:#7a7a7a;font-family:'Liberation Serif',serif;text-shadow:1px 1px 2px #aaa">S</div>
<div class="t" style="left:569px;top:285.69px;font-size:11px;color:#7a7a7a;font-family:'Liberation Serif',serif;text-decoration:line-through">abc</div>
<div class="t" style="left:593px;top:278.88px;font-size:9px;color:#7a7a7a;font-family:'Liberation Serif',serif">AV</div>
<svg class="a" style="left:593px;top:286px;" width="16" height="6" viewBox="0 0 16 6"><path d="M1 3 L15 3 M3 1 L1 3 L3 5 M13 1 L15 3 L13 5" stroke="#7a7a7a" stroke-width="1" fill="none"/></svg>
<svg class="a" style="left:610.5px;top:283.0px;" width="6" height="3" viewBox="0 0 6 3"><path d="M0 0 L6 0 L3 3Z" fill="#b8b8c0"/></svg>
<div class="t" style="left:624px;top:285.50px;font-size:13px;color:#7a7a7a;font-family:'Liberation Serif',serif">Aa</div>
<svg class="a" style="left:642.5px;top:283.0px;" width="6" height="3" viewBox="0 0 6 3"><path d="M0 0 L6 0 L3 3Z" fill="#b8b8c0"/></svg>
<div class="a" style="left:655px;top:277px;width:1px;height:20px;background:#d4d8de"></div>
<div class="t" style="left:667px;top:284.80px;font-size:15px;color:#7a7a7a;font-family:'Liberation Serif',serif">A</div>
<svg class="a" style="left:685.5px;top:283.0px;" width="6" height="3" viewBox="0 0 6 3"><path d="M0 0 L6 0 L3 3Z" fill="#b8b8c0"/></svg>
<div class="t" style="left:560.00px;top:311.59px;font-size:11px;color:#545a66;transform:scaleX(1.0449);transform-origin:0 0;">Font</div>
<svg class="a" style="left:686px;top:309px;" width="8" height="8" viewBox="0 0 8 8"><path d="M0.5 7 L0.5 0.5 L7 0.5" stroke="#b4b8be" fill="none"/><path d="M3 3 L7 7 M7 4 L7 7 L4 7" stroke="#8c9096" fill="none"/></svg>
<svg class="a" style="left:708px;top:249px;" width="16" height="13" viewBox="0 0 16 13"><circle cx="2" cy="2" r="1.3" fill="#8a8a8a"/><circle cx="2" cy="6.5" r="1.3" fill="#8a8a8a"/><circle cx="2" cy="11" r="1.3" fill="#8a8a8a"/><path d="M6 2 L15 2 M6 6.5 L15 6.5 M6 11 L15 11" stroke="#8a8a8a" stroke-width="1.1"/></svg>
<svg class="a" style="left:728px;top:254.5px;" width="6" height="3" viewBox="0 0 6 3"><path d="M0 0 L6 0 L3 3Z" fill="#b8b8c0"/></svg>
<svg class="a" style="left:741px;top:249px;" width="16" height="13" viewBox="0 0 16 13"><text x="0" y="4.5" font-size="5" fill="#8a8a8a" font-family="Liberation Sans">1</text><text x="0" y="9" font-size="5" fill="#8a8a8a" font-family="Liberation Sans">2</text><text x="0" y="13.5" font-size="5" fill="#8a8a8a" font-family="Liberation Sans">3</text><path d="M6 2 L15 2 M6 6.5 L15 6.5 M6 11 L15 11" stroke="#8a8a8a" stroke-width="1.1"/></svg>
<svg class="a" style="left:761px;top:254.5px;" width="6" height="3" viewBox="0 0 6 3"><path d="M0 0 L6 0 L3 3Z" fill="#b8b8c0"/></svg>
<div class="a" style="left:776px;top:246px;width:1px;height:20px;background:#d4d8de"></div>
<svg class="a" style="left:784px;top:248px;" width="17" height="15" viewBox="0 0 17 15"><path d="M7 2 L16 2 M7 5 L16 5 M7 8 L16 8 M7 11 L16 11 M1 14 L16 14" stroke="#8a8a8a" stroke-width="1.1"/><path d="M5 5 L1 7 L5 9 M1 7 L6 7" stroke="#a0a0a0" fill="none"/></svg>
<svg class="a" style="left:806px;top:248px;" width="17" height="15" viewBox="0 0 17 15"><path d="M7 2 L16 2 M7 5 L16 5 M7 8 L16 8 M7 11 L16 11 M1 14 L16 14" stroke="#8a8a8a" stroke-width="1.1"/><path d="M2 5 L6 7 L2 9 M1 7 L6 7" stroke="#a0a0a0" fill="none"/></svg>
<div class="a" style="left:829px;top:246px;width:1px;height:20px;background:#d4d8de"></div>
<svg class="a" style="left:838px;top:246px;" width="18" height="18" viewBox="0 0 18 18"><path d="M7 5 L16 5 M7 8 L16 8 M7 11 L16 11 M7 14 L16 14" stroke="#8a8a8a" stroke-width="1.1"/><path d="M3 1 L3 17 M1 3 L3 1 L5 3 M1 15 L3 17 L5 15" stroke="#8a8a8a" fill="none"/></svg>
<svg class="a" style="left:856px;top:254.5px;" width="6" height="3" viewBox="0 0 6 3"><path d="M0 0 L6 0 L3 3Z" fill="#b8b8c0"/></svg>
<svg class="a" style="left:869px;top:240px;" width="16" height="16" viewBox="0 0 16 16"><path d="M1 1 L1 14 M4 1 L4 14 M8 6 L8 14 M12 6 L12 14" stroke="#8a8a8a" stroke-width="1.1"/><path d="M0 12 L1 14 L2 12 M3 12 L4 14 L5 12 M7 12 L8 14 L9 12 M11 12 L12 14 L13 12" stroke="#8a8a8a" fill="none"/><text x="8" y="6" font-size="7" fill="#8a8a8a" font-family="Liberation Serif">A</text></svg>
<div class="t" style="left:888.50px;top:248.29px;font-size:11px;color:#a3a3ad;transform:scaleX(1.0280);transform-origin:0 0;">Text Direction</div>
<svg class="a" style="left:961.5px;top:247.0px;" width="6" height="3" viewBox="0 0 6 3"><path d="M0 0 L6 0 L3 3Z" fill="#bbbbc4"/></svg>
<svg class="a" style="left:869px;top:262px;" width="17" height="17" viewBox="0 0 17 17"><rect x="0.5" y="2.5" width="15" height="12" fill="#f2f2f2" stroke="#b4b4b4"/><path d="M3 6 L13 6 M3 8 L13 8 M3 10 L13 10 M3 12 L13 12" stroke="#c4c4c4"/><path d="M8 0 L8 4 M6.5 1.5 L8 0 L9.5 1.5 M8 13 L8 17 M6.5 15.5 L8 17 L9.5 15.5" stroke="#9a9a9a" fill="none"/></svg>
<div class="t" style="left:888.50px;top:270.19px;font-size:11px;color:#a3a3ad;transform:scaleX(1.0423);transform-origin:0 0;">Align Text</div>
<svg class="a" style="left:942px;top:269.0px;" width="6" height="3" viewBox="0 0 6 3"><path d="M0 0 L6 0 L3 3Z" fill="#bbbbc4"/></svg>
<svg class="a" style="left:869px;top:284px;" width="17" height="17" viewBox="0 0 17 17"><path d="M0 1 L8 1 L11 5 L8 9 L0 9Z" fill="#d8d8d8"/><rect x="5.5" y="6.5" width="11" height="10" fill="#f0f0f0" stroke="#b0b0b0"/><path d="M8 9 L9 9 M10.5 9 L14 9 M8 11.5 L9 11.5 M10.5 11.5 L14 11.5 M8 14 L9 14 M10.5 14 L14 14" stroke="#b0b0b0"/></svg>
<div class="t" style="left:888.50px;top:292.19px;font-size:11px;color:#a3a3ad;transform:scaleX(1.0391);transform-origin:0 0;">Convert to SmartArt</div>
<svg class="a" style="left:992px;top:291.0px;" width="6" height="3" viewBox="0 0 6 3"><path d="M0 0 L6 0 L3 3Z" fill="#bbbbc4"/></svg>
<svg class="a" style="left:709px;top:279px;" width="15" height="12" viewBox="0 0 15 12"><path d="M0 1 L14 1 M0 3.5 L9 3.5 M0 6 L14 6 M0 8.5 L9 8.5 M0 11 L14 11 " stroke="#8a8a8a" stroke-width="1"/></svg>
<svg class="a" style="left:732px;top:279px;" width="15" height="12" viewBox="0 0 15 12"><path d="M0 1 L14 1 M2.5 3.5 L11.5 3.5 M0 6 L14 6 M2.5 8.5 L11.5 8.5 M0 11 L14 11 " stroke="#8a8a8a" stroke-width="1"/></svg>
<svg class="a" style="left:756px;top:279px;" width="15" height="12" viewBox="0 0 15 12"><path d="M0 1 L14 1 M5 3.5 L14 3.5 M0 6 L14 6 M5 8.5 L14 8.5 M0 11 L14 11 " stroke="#8a8a8a" stroke-width="1"/></svg>
<svg class="a" style="left:779px;top:279px;" width="15" height="12" viewBox="0 0 15 12"><path d="M0 1 L14 1 M0 3.5 L14 3.5 M0 6 L14 6 M0 8.5 L14 8.5 M0 11 L14 11 " stroke="#8a8a8a" stroke-width="1"/></svg>
<div class="a" style="left:801px;top:277px;width:1px;height:20px;background:#d4d8de"></div>
<svg class="a" style="left:811px;top:279px;" width="14" height="13" viewBox="0 0 14 13"><path d="M0 1 L6 1 M0 4 L6 4 M0 7 L6 7 M0 10 L6 10 M8 1 L14 1 M8 4 L14 4 M8 7 L14 7 M8 10 L14 10" stroke="#8a8a8a" stroke-width="1.1"/></svg>
<svg class="a" style="left:827.5px;top:283.0px;" width="6" height="3" viewBox="0 0 6 3"><path d="M0 0 L6 0 L3 3Z" fill="#b8b8c0"/></svg>
<div class="t" style="left:816.70px;top:311.59px;font-size:11px;color:#545a66;">Paragraph</div>
<svg class="a" style="left:993px;top:309px;" width="8" height="8" viewBox="0 0 8 8"><path d="M0.5 7 L0.5 0.5 L7 0.5" stroke="#b4b8be" fill="none"/><path d="M3 3 L7 7 M7 4 L7 7 L4 7" stroke="#8c9096" fill="none"/></svg>
<div class="a" style="left:1012px;top:240px;width:137px;height:60px;background:#fff;border:1px solid #c5ccd4"></div>
<div class="a" style="left:1134px;top:241px;width:14px;height:58px;background:linear-gradient(180deg,#fbfcfd,#eef1f4);border-left:1px solid #dfe3e8"></div>
<div class="a" style="left:1135px;top:260px;width:13px;height:1px;background:#dfe3e8"></div>
<div class="a" style="left:1135px;top:280px;width:13px;height:1px;background:#dfe3e8"></div>
<svg class="a" style="left:1138px;top:249px;" width="7" height="4" viewBox="0 0 7 4"><path d="M0 4 L3.5 0 L7 4Z" fill="#c4c9d0"/></svg>
<svg class="a" style="left:1138px;top:269px;" width="7" height="4" viewBox="0 0 7 4"><path d="M0 0 L7 0 L3.5 4Z" fill="#555"/></svg>
<svg class="a" style="left:1138px;top:287px;" width="7" height="7" viewBox="0 0 7 7"><rect x="0" y="0" width="7" height="1" fill="#555"/><path d="M0 3 L7 3 L3.5 7Z" fill="#555"/></svg>
<svg class="a" style="left:1012px;top:240px" width="124" height="60"><defs><linearGradient id="shg" x1="0" y1="0" x2="1" y2="1"><stop offset="0" stop-color="#fff"/><stop offset="1" stop-color="#cfdcec"/></linearGradient></defs><rect x="3.5" y="3.5" width="14.5" height="12" fill="#fff" stroke="#23477a" stroke-width="1.1"/><path d="M9.5 7.5 L16.5 7.5 M9.5 9.8 L16.5 9.8 M5 12 L16.5 12 M5 14 L16.5 14" stroke="#6a86b8" stroke-width=".7"/><path d="M4.8 10.5 L7 5 L9.2 10.5 M5.6 8.8 L8.4 8.8" stroke="#111" stroke-width="1.1" fill="none"/><path d="M24 3 L37.5 16.5" stroke="#23477a" stroke-width="1.1"/><path d="M44 3 L56 15" stroke="#23477a" stroke-width="1.1"/><path d="M58.5 17.5 L53.5 16.5 L57.5 12.5Z" fill="#23477a"/><rect x="63.5" y="4.5" width="15" height="11" fill="url(#shg)" stroke="#23477a" stroke-width="1.1"/><ellipse cx="90.5" cy="10" rx="7.3" ry="5.6" fill="url(#shg)" stroke="#23477a" stroke-width="1.1"/><rect x="103.5" y="4.5" width="15.5" height="11" rx="3" fill="url(#shg)" stroke="#23477a" stroke-width="1.1"/><path d="M5 36.5 L11.5 23.5 L18 36.5Z" fill="url(#shg)" stroke="#23477a" stroke-width="1.1"/><path d="M23.3 24.8 L30.8 24.8 L30.8 35.3 L39 35.3" stroke="#23477a" stroke-width="1.1" fill="none"/><path d="M43.3 24.8 L50.5 24.8 L50.5 35.5 L56 35.5" stroke="#23477a" stroke-width="1.1" fill="none"/><path d="M55 32.5 L58.5 35.5 L55 38.5Z" fill="#23477a"/><path d="M63.5 26.5 L70 26.5 L70 22.5 L77.5 29.5 L70 36.5 L70 32.5 L63.5 32.5Z" fill="url(#shg)" stroke="#23477a" stroke-width="1.1"/><path d="M87 22.5 L94 22.5 L94 29 L97.5 29 L90.5 36.5 L83.5 29 L87 29Z" fill="url(#shg)" stroke="#23477a" stroke-width="1.1"/><path d="M105.5 30 Q105.5 25 110 24.5 L113 24.5 Q113 27 116 27 Q118.5 28 117.5 31 Q115.5 31.5 116.5 34.5 L108 34.5 Q105.5 34.5 105.5 32Z" fill="url(#shg)" stroke="#23477a" stroke-width="1.1"/><path d="M8.5 42.5 Q6 45 8 47 Q13 47 12 51 Q10 54 13 55 Q16 55 14 52 Q12 53 13 57" stroke="#23477a" stroke-width="1" fill="none"/><path d="M24 44 Q33 44 37.5 54.5" stroke="#23477a" stroke-width="1.1" fill="none"/><path d="M43 55 Q46 43.5 48.8 43.5 Q51 43.5 53.5 51 Q55 55 58.5 55" stroke="#23477a" stroke-width="1.1" fill="none"/><path d="M72.5 42.5 Q68.5 42.5 68.5 46 L68.5 48 Q68.5 50 65.5 50 Q68.5 50 68.5 52.5 L68.5 54 Q68.5 57 72.5 57" stroke="#23477a" stroke-width="1.1" fill="none"/><path d="M87.5 42.5 Q91.5 42.5 91.5 46 L91.5 48 Q91.5 50 94.5 50 Q91.5 50 91.5 52.5 L91.5 54 Q91.5 57 87.5 57" stroke="#23477a" stroke-width="1.1" fill="none"/><path d="M110.5 43.5 L112.6 48.6 L118 48.8 L113.8 52.2 L115.3 57.3 L110.5 54.3 L105.7 57.3 L107.2 52.2 L103 48.8 L108.4 48.6Z" fill="url(#shg)" stroke="#23477a" stroke-width="1.1"/></svg>
<svg class="a" style="left:1158px;top:239px;" width="32" height="32" viewBox="0 0 32 32"><rect x="6.5" y="6.5" width="18" height="18" fill="#f5dc6e" stroke="#c9a93a"/><rect x="0.5" y="0.5" width="14" height="14" fill="url(#arg)" stroke="#4b5563"/><rect x="17.5" y="17.5" width="13" height="13" fill="url(#arg)" stroke="#4b5563"/><defs><linearGradient id="arg" x1="0" y1="0" x2="0" y2="1"><stop offset="0" stop-color="#f4f5f7"/><stop offset="1" stop-color="#b9bec6"/></linearGradient></defs></svg>
<div class="t" style="left:1154.00px;top:281.59px;font-size:11px;color:#363636;transform:scaleX(1.0323);transform-origin:0 0;">Arrange</div>
<svg class="a" style="left:1171.5px;top:293.0px;" width="6" height="3" viewBox="0 0 6 3"><path d="M0 0 L6 0 L3 3Z" fill="#595959"/></svg>
<svg class="a" style="left:1204px;top:241px;" width="32" height="30" viewBox="0 0 32 30"><rect x="1" y="0.5" width="28" height="28" rx="6" fill="#dcdcdf" stroke="#c8c8cc"/><path d="M18 26 Q20 20 30 10 L32 12 Q24 22 20 28Z" fill="#c8c8cc" stroke="#b0b0b4" stroke-width=".8"/></svg>
<div class="t" style="left:1203.45px;top:281.59px;font-size:11px;color:#a3a3ad;transform:scaleX(1.0492);transform-origin:0 0;">Quick</div>
<div class="t" style="left:1200.50px;top:294.59px;font-size:11px;color:#a3a3ad;transform:scaleX(0.9347);transform-origin:0 0;">Styles</div>
<svg class="a" style="left:1231.5px;top:294.0px;" width="6" height="3" viewBox="0 0 6 3"><path d="M0 0 L6 0 L3 3Z" fill="#bbbbc4"/></svg>
<svg class="a" style="left:1243px;top:240px;" width="17" height="17" viewBox="0 0 17 17"><path d="M2 8 L8 2.5 L13.5 8 L8 13.5Z" fill="#f2f2f4" stroke="#9c9ca2" stroke-width=".9"/><path d="M7.5 1 Q9 0 9.5 2 L9.5 7" stroke="#9c9ca2" fill="none"/><path d="M12 6 Q15.5 6.5 15 12 Q13.5 12 13.5 9Z" fill="#b4b4b8"/><rect x="0" y="13" width="16" height="4" fill="#e2e2e6"/></svg>
<div class="t" style="left:1262.40px;top:248.19px;font-size:11px;color:#a3a3ad;">Shape Fill</div>
<svg class="a" style="left:1315.5px;top:247.0px;" width="6" height="3" viewBox="0 0 6 3"><path d="M0 0 L6 0 L3 3Z" fill="#bbbbc4"/></svg>
<svg class="a" style="left:1243px;top:262px;" width="17" height="17" viewBox="0 0 17 17"><path d="M8.5 2.5 L0.5 2.5 L0.5 10 L5 10" fill="none" stroke="#8a8a8a"/><path d="M5 10.5 L13.5 2 Q15 1.5 15.5 3 L7 11.5 L5 12Z" fill="#e8e8ea" stroke="#a0a0a4" stroke-width=".8"/><rect x="0" y="12" width="16" height="4" fill="#9a9a9a"/></svg>
<div class="t" style="left:1262.40px;top:270.19px;font-size:11px;color:#a3a3ad;transform:scaleX(1.0614);transform-origin:0 0;">Shape Outline</div>
<svg class="a" style="left:1340.5px;top:269.0px;" width="6" height="3" viewBox="0 0 6 3"><path d="M0 0 L6 0 L3 3Z" fill="#bbbbc4"/></svg>
<svg class="a" style="left:1243px;top:285px;" width="16" height="15" viewBox="0 0 16 15"><path d="M1.5 5 Q1.5 1 5.5 1 L11 1 Q14.5 1 14.5 5 L14.5 8.5 Q14.5 11.5 11 11.5 L5 11.5 Q1.5 11.5 1.5 8Z" fill="#ebeaee" stroke="#c4c4c8" stroke-width=".8"/><path d="M2 8.5 Q3 11.5 6 11.5 L11 11.5 Q13.5 11.5 14.5 9" fill="none" stroke="#a8a8ac" stroke-width="1.2"/><ellipse cx="9" cy="13" rx="5" ry="1.5" fill="#ededed"/></svg>
<div class="t" style="left:1262.40px;top:292.19px;font-size:11px;color:#a3a3ad;">Shape Effects</div>
<svg class="a" style="left:1334.5px;top:291.0px;" width="6" height="3" viewBox="0 0 6 3"><path d="M0 0 L6 0 L3 3Z" fill="#bbbbc4"/></svg>
<div class="t" style="left:1148.75px;top:311.59px;font-size:11px;color:#545a66;transform:scaleX(1.0533);transform-origin:0 0;">Drawing</div>
<svg class="a" style="left:1340px;top:309px;" width="8" height="8" viewBox="0 0 8 8"><path d="M0.5 7 L0.5 0.5 L7 0.5" stroke="#b4b8be" fill="none"/><path d="M3 3 L7 7 M7 4 L7 7 L4 7" stroke="#8c9096" fill="none"/></svg>
<svg class="a" style="left:1362px;top:241px;" width="15" height="13" viewBox="0 0 15 13"><defs><linearGradient id="bino" x1="0" y1="0" x2="1" y2="0"><stop offset="0" stop-color="#fff"/><stop offset="1" stop-color="#5b78c0"/></linearGradient></defs><path d="M2 0.5 L5 0.5 L5 3 L6 3 L6 7 L6.5 7 L6.5 12.5 L0.5 12.5 L0.5 7 L1 7 L1 3 L2 3Z" fill="url(#bino)" stroke="#243f8a" stroke-width="1"/><path d="M10 0.5 L13 0.5 L13 3 L14 3 L14 7 L14.5 7 L14.5 12.5 L8.5 12.5 L8.5 7 L9 7 L9 3 L10 3Z" fill="url(#bino)" stroke="#243f8a" stroke-width="1"/><rect x="6" y="4.5" width="3" height="2.5" fill="#243f8a"/></svg>
<div class="t" style="left:1381.50px;top:248.19px;font-size:11px;color:#363636;transform:scaleX(1.0281);transform-origin:0 0;">Find</div>
<svg class="a" style="left:1362px;top:262px;" width="17" height="17" viewBox="0 0 17 17"><text x="0" y="8" font-size="9" fill="#333" font-family="Liberation Serif">a</text><text x="5" y="8" font-size="9" fill="#b0b0b0" font-family="Liberation Serif">b</text><text x="6" y="15.5" font-size="9" font-weight="bold" fill="#333" font-family="Liberation Sans">a</text><text x="11.2" y="15.5" font-size="9" font-weight="bold" fill="#1a8a2a" font-family="Liberation Sans">c</text><path d="M1 9.5 Q1 12.5 4.5 12.5" stroke="#2a4f9a" stroke-width="1" fill="none"/><path d="M3.5 11 L5.5 12.5 L3.5 14Z" fill="#2a4f9a"/></svg>
<div class="t" style="left:1381.50px;top:270.19px;font-size:11px;color:#363636;transform:scaleX(0.9663);transform-origin:0 0;">Replace</div>
<svg class="a" style="left:1425.5px;top:269.0px;" width="6" height="3" viewBox="0 0 6 3"><path d="M0 0 L6 0 L3 3Z" fill="#595959"/></svg>
<svg class="a" style="left:1365px;top:284px;" width="10" height="16" viewBox="0 0 10 16"><path d="M0.5 0.5 L0.5 12 L3.2 9.6 L5.8 15 L7.8 14 L5.3 8.8 L9 8.8Z" fill="#fff" stroke="#3d4f78" stroke-width="1" stroke-linejoin="round"/></svg>
<div class="t" style="left:1381.50px;top:292.19px;font-size:11px;color:#363636;transform:scaleX(0.9486);transform-origin:0 0;">Select</div>
<svg class="a" style="left:1415.5px;top:291.0px;" width="6" height="3" viewBox="0 0 6 3"><path d="M0 0 L6 0 L3 3Z" fill="#595959"/></svg>
<div class="t" style="left:1378.40px;top:311.59px;font-size:11px;color:#545a66;transform:scaleX(1.0882);transform-origin:0 0;">Editing</div>
<div class="a" style="left:190px;top:325px;width:244px;height:586px;background:#e9ecf0;border-top:2px solid #f4f6f8;border-left:2px solid #f2f4f6"></div>
<div class="a" style="left:190px;top:324px;width:1px;height:587px;background:#8d9399"></div>
<div class="a" style="left:193px;top:327px;width:239px;height:22px;background:#d0d6de"></div>
<div class="t" style="left:195.60px;top:337.64px;font-size:12px;color:#333;transform:scaleX(0.9751);transform-origin:0 0;">Document Recovery</div>
<div class="t" style="left:198.40px;top:362.89px;font-size:11px;color:#3a3a3a;transform:scaleX(0.9831);transform-origin:0 0;">PowerPoint has recovered the following files.</div>
<div class="t" style="left:198.40px;top:375.89px;font-size:11px;color:#3a3a3a;transform:scaleX(0.9888);transform-origin:0 0;">Save the ones you wish to keep.</div>
<div class="t" style="left:199.20px;top:404.89px;font-size:11px;color:#333;font-weight:bold;transform:scaleX(1.0759);transform-origin:0 0;">Available files</div>
<div class="a" style="left:199px;top:410px;width:227px;height:1px;background:#a3a9b0"></div>
<div class="a" style="left:208px;top:418px;width:218px;height:424px;background:#fff;border:1px solid #8d949b"></div>
<div class="a" style="left:408px;top:419px;width:17px;height:422px;background:#f0f0f0"></div>
<svg class="a" style="left:412px;top:426px;" width="9" height="6" viewBox="0 0 9 6"><path d="M1 5 L4.5 1.5 L8 5" stroke="#c4c4c4" stroke-width="1.2" fill="none"/></svg>
<svg class="a" style="left:412px;top:828px;" width="9" height="6" viewBox="0 0 9 6"><path d="M1 1 L4.5 4.5 L8 1" stroke="#c4c4c4" stroke-width="1.2" fill="none"/></svg>
<svg class="a" style="left:219px;top:424px;" width="18" height="17" viewBox="0 0 18 17"><path d="M4.5 3.5 L13 3.5 L16.5 7 L16.5 16.5 L4.5 16.5Z" fill="#f2f6fb" stroke="#5a7bb0"/><path d="M8 9 L14 9 M8 11 L14 11 M8 13 L14 13" stroke="#7f9cc8" stroke-width=".8"/><rect x="0.5" y="0.5" width="10" height="10" fill="#fbd5c5" stroke="#d24726"/><text x="2.5" y="9" font-size="8.5" font-weight="bold" fill="#c7421a" font-family="Liberation Sans">P</text></svg>
<div class="t" style="left:245.40px;top:431.19px;font-size:11px;color:#1e1e1e;">ppt6B1.pptm  [Autosaved]</div>
<div class="t" style="left:245.40px;top:446.19px;font-size:11px;color:#1e1e1e;transform:scaleX(1.0089);transform-origin:0 0;">Version created from the last ...</div>
<div class="t" style="left:245.40px;top:461.19px;font-size:11px;color:#1e1e1e;transform:scaleX(1.0200);transform-origin:0 0;">9:02 AM Thursday, April 13, 2...</div>
<div class="a" style="left:215px;top:485px;width:187px;height:1px;background:#111"></div>
<svg class="a" style="left:199px;top:855px;" width="16" height="16" viewBox="0 0 16 16"><circle cx="8" cy="8" r="7.6" fill="#4a7fd0"/><circle cx="8" cy="6" r="6" fill="#8ab0ea" opacity=".45"/><text x="4.3" y="12.6" font-size="11.5" font-weight="bold" fill="#fff" font-family="Liberation Sans">?</text></svg>
<div class="t" style="left:220.70px;top:862.69px;font-size:11px;color:#2a63c4;transform:scaleX(0.9892);transform-origin:0 0;">Which file do I want to save?</div>
<div class="a" style="left:383px;top:879px;width:42px;height:21px;background:linear-gradient(180deg,#f4f4f4,#e4e4e4);border:1px solid #9a9ea4"></div>
<div class="t" style="left:391.10px;top:889.69px;font-size:11px;color:#1e1e1e;transform:scaleX(0.9174);transform-origin:0 0;">Close</div>
<div class="a" style="left:434px;top:325px;width:1px;height:586px;background:#8d9399"></div>
<div class="a" style="left:435px;top:325px;width:184px;height:586px;background:linear-gradient(180deg,#cfd3d8 0,#c4c8cd 40%,#bcbfc4 100%)"></div>
<div class="a" style="left:435px;top:325px;width:62px;height:20px;background:linear-gradient(180deg,#eceef0,#d2d6db)"></div>
<div class="a" style="left:497px;top:325px;width:63px;height:20px;background:linear-gradient(180deg,#d3d7dc,#c4c8cd);border-left:1px solid #a3a9b0;border-right:1px solid #a3a9b0"></div>
<div class="a" style="left:560px;top:325px;width:58px;height:20px;background:linear-gradient(180deg,#d0d4d9,#c4c8cd)"></div>
<div class="a" style="left:497px;top:344px;width:121px;height:1px;background:#a3a9b0"></div>
<div class="t" style="left:450.90px;top:333.54px;font-size:12px;color:#2e2e2e;transform:scaleX(0.9240);transform-origin:0 0;">Slides</div>
<div class="t" style="left:510.70px;top:333.54px;font-size:12px;color:#2e2e2e;">Outline</div>
<svg class="a" style="left:604px;top:331px;" width="8" height="8" viewBox="0 0 8 8"><path d="M1 1 L7 7 M7 1 L1 7" stroke="#4a4a4a" stroke-width="1.8"/></svg>
<div class="a" style="left:438px;top:348px;width:177px;height:124px;background:linear-gradient(180deg,#fdf0c2 0,#fee6a0 25%,#fde08a 50%,#fde598 65%,#fff6d6 85%,#fffbea 100%);border:1px solid #f2c75c;border-radius:3px;box-shadow:inset 0 0 0 1px rgba(255,255,255,.6)"></div>
<div class="a" style="left:458px;top:352px;width:153px;height:116px;background:#fff;border:1px solid #7f858c;box-shadow:1px 1px 3px rgba(80,60,0,.35)"></div>
<div class="t" style="left:445.50px;top:363.14px;font-size:12px;color:#1f2a3a;font-weight:bold;">1</div>
<div class="a" style="left:618px;top:325px;width:1px;height:586px;background:#8f959b"></div>
<div class="a" style="left:619px;top:324px;width:4px;height:587px;background:linear-gradient(90deg,#fff,#eceef0)"></div>
<div class="a" style="left:623px;top:324px;width:991px;height:544px;background:linear-gradient(180deg,#d2d5da 0,#c9ccd1 30%,#bcbfc4 100%);border-left:1px solid #8f959b"></div>
<div class="a" style="left:779px;top:341px;width:680px;height:510px;background:#fff;box-shadow:0 0 2px rgba(0,0,0,.3),3px 4px 9px rgba(0,0,0,.38)"></div>
<div class="a" style="left:830px;top:499px;width:579px;height:111px;border:1px dotted #555"></div>
<div class="t" style="left:982.50px;top:555.29px;font-size:41px;color:#000;transform:scaleX(0.9399);transform-origin:0 0;">Click to add title</div>
<div class="a" style="left:881px;top:630px;width:477px;height:131px;border:1px dotted #555"></div>
<div class="t" style="left:998.50px;top:651.64px;font-size:27px;color:#8a8a8a;transform:scaleX(1.0251);transform-origin:0 0;">Click to add subtitle</div>
<div class="a" style="left:623px;top:868px;width:991px;height:1px;background:#a8adb3"></div>
<div class="a" style="left:623px;top:869px;width:991px;height:4px;background:#eceef0"></div>
<div class="a" style="left:623px;top:873px;width:991px;height:38px;background:#fff;border-top:1px solid #8f959b;border-left:1px solid #8f959b"></div>
<div class="a" style="left:1598px;top:874px;width:16px;height:37px;background:#e9ebee"></div>
<svg class="a" style="left:1600px;top:878px;" width="11" height="6" viewBox="0 0 11 6"><path d="M0 6 L5.5 0 L11 6Z" fill="#8e9a9a"/></svg>
<svg class="a" style="left:1600px;top:898px;" width="11" height="6" viewBox="0 0 11 6"><path d="M0 0 L11 0 L5.5 6Z" fill="#8e9a9a"/></svg>
<div class="t" style="left:634.00px;top:889.08px;font-size:16.5px;color:#111;transform:scaleX(0.9493);transform-origin:0 0;">Click to add notes</div>
<div class="a" style="left:190px;top:911px;width:1424px;height:22px;background:linear-gradient(180deg,#e8eaed 0,#dfe2e6 50%,#d2d5da 100%);border-top:1px solid #a9aeb4"></div>
<div class="t" style="left:198.00px;top:922.19px;font-size:11px;color:#333;transform:scaleX(1.0175);transform-origin:0 0;">Slide 1 of 1</div>
<div class="a" style="left:264px;top:913px;width:1px;height:20px;background:#b4b9bf"></div>
<div class="t" style="left:273.50px;top:922.19px;font-size:11px;color:#333;transform:scaleX(1.0281);transform-origin:0 0;">"Office Theme"</div>
<div class="a" style="left:358px;top:913px;width:1px;height:20px;background:#b4b9bf"></div>
<div class="a" style="left:1320px;top:913px;width:1px;height:20px;background:#b4b9bf"></div>
<div class="a" style="left:1325px;top:913px;width:19px;height:18px;background:linear-gradient(180deg,#fde9a0,#fbd15a);border:1px solid #e8b43a;border-radius:3px"></div>
<svg class="a" style="left:1328px;top:916px;" width="13" height="12" viewBox="0 0 13 12"><rect x="0.5" y="0.5" width="12" height="11" fill="#fff" stroke="#333"/><rect x="2" y="2" width="3.5" height="8" fill="#333"/><rect x="7" y="2" width="4" height="3" fill="#777"/><rect x="7" y="6.5" width="4" height="3.5" fill="#777"/></svg>
<svg class="a" style="left:1347px;top:915px;" width="12" height="12" viewBox="0 0 12 12"><rect x="0.5" y="0.5" width="4.5" height="4" fill="none" stroke="#555"/><rect x="7" y="0.5" width="4.5" height="4" fill="none" stroke="#555"/><rect x="0.5" y="7" width="4.5" height="4" fill="none" stroke="#555"/><rect x="7" y="7" width="4.5" height="4" fill="none" stroke="#555"/></svg>
<svg class="a" style="left:1365px;top:915px;" width="12" height="13" viewBox="0 0 12 13"><path d="M0.5 1 L5.5 2 L5.5 12 L0.5 11Z M11.5 1 L6.5 2 L6.5 12 L11.5 11Z" fill="#f4f4f4" stroke="#555"/><path d="M2 4 L4.5 4.5 M2 6 L4.5 6.5 M2 8 L4.5 8.5 M8 4.5 L10 4 M8 6.5 L10 6 M8 8.5 L10 8" stroke="#888" stroke-width=".7"/></svg>
<svg class="a" style="left:1384px;top:915px;" width="12" height="12" viewBox="0 0 12 12"><rect x="0.5" y="0.5" width="11" height="5" fill="none" stroke="#555"/><path d="M6 6 L6 10 M3 11 L9 11 M2.5 3 L9.5 3" stroke="#555"/></svg>
<div class="t" style="left:1408.70px;top:922.19px;font-size:11px;color:#333;transform:scaleX(0.9538);transform-origin:0 0;">71%</div>
<svg class="a" style="left:1437px;top:914px;" width="18" height="17" viewBox="0 0 18 17"><circle cx="8.5" cy="8" r="7.5" fill="#f8f9fa" stroke="#7d838a"/><path d="M5 8 L12 8" stroke="#333" stroke-width="1.8"/></svg>
<div class="a" style="left:1454px;top:921px;width:100px;height:1px;background:#8e949a"></div>
<div class="a" style="left:1503px;top:919px;width:1px;height:5px;background:#8e949a"></div>
<svg class="a" style="left:1484px;top:914px;" width="10" height="15" viewBox="0 0 10 15"><path d="M0.5 0.5 L9.5 0.5 L9.5 10 L5 14 L0.5 10Z" fill="#f6f7f8" stroke="#6d737a"/></svg>
<svg class="a" style="left:1553px;top:914px;" width="18" height="17" viewBox="0 0 18 17"><circle cx="8.5" cy="8" r="7.5" fill="#f8f9fa" stroke="#7d838a"/><path d="M5 8 L12 8 M8.5 4.5 L8.5 11.5" stroke="#333" stroke-width="1.8"/></svg>
<svg class="a" style="left:1578px;top:914px;" width="16" height="16" viewBox="0 0 16 16"><rect x="0.5" y="0.5" width="15" height="15" rx="2" fill="#eef0f2" stroke="#5c6268"/><path d="M8 2 L8 6 M6.5 4.5 L8 6 L9.5 4.5 M8 14 L8 10 M6.5 11.5 L8 10 L9.5 11.5 M2 8 L6 8 M4.5 6.5 L6 8 L4.5 9.5 M14 8 L10 8 M11.5 6.5 L10 8 L11.5 9.5" stroke="#333" stroke-width=".8" fill="none"/></svg>
<svg class="a" style="left:1603px;top:923px;" width="9" height="9" viewBox="0 0 9 9"><circle cx="7.5" cy="1.5" r=".8" fill="#999"/><circle cx="4.5" cy="4.5" r=".8" fill="#999"/><circle cx="7.5" cy="4.5" r=".8" fill="#999"/><circle cx="1.5" cy="7.5" r=".8" fill="#999"/><circle cx="4.5" cy="7.5" r=".8" fill="#999"/><circle cx="7.5" cy="7.5" r=".8" fill="#999"/></svg>
</body></html>
